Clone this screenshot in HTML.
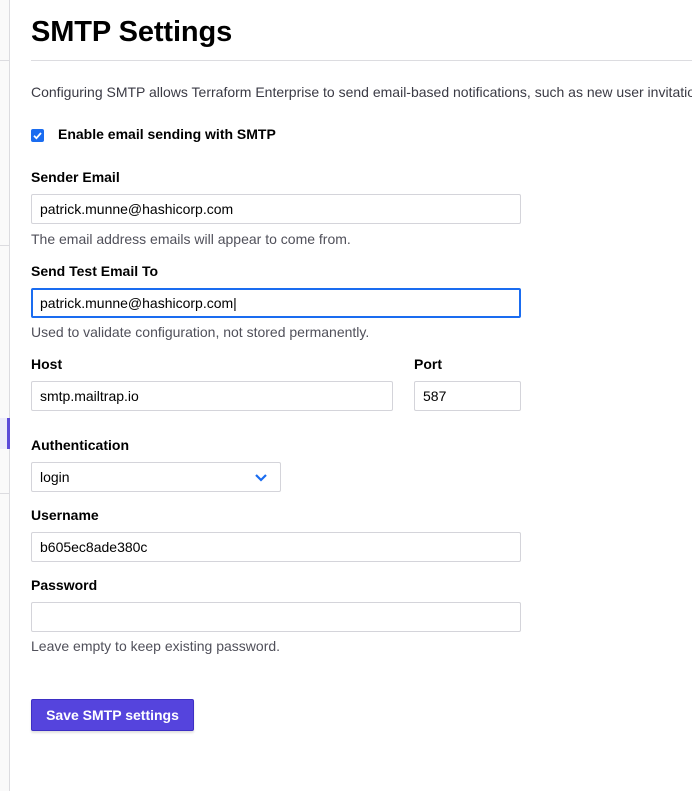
<!DOCTYPE html>
<html><head><style>
html,body{margin:0;width:692px;height:791px;overflow:hidden}
body{background:#fff;font-family:"Liberation Sans",Arial,sans-serif;color:#000;position:relative}
.wrap{position:absolute;left:0;top:0;width:692px;height:791px;overflow:hidden}
.side{position:absolute;left:0;top:0;width:9px;height:791px;background:#fafafa;border-right:1px solid #dcdce0}
.hl{position:absolute;left:0;width:9px;height:1px;background:#dcdce0}
.abs{position:absolute}
h1{position:absolute;left:31px;top:16px;margin:0;font-size:29px;font-weight:bold;letter-spacing:-0.1px}
.rule{position:absolute;left:31px;top:60px;width:661px;height:1px;background:#dcdce0}
.p{font-size:14px;color:#3a3a44;white-space:nowrap}
.lbl{font-size:14px;font-weight:bold;color:#000}
.inp{position:absolute;height:30px;box-sizing:border-box;border:1px solid #d4d4da;border-radius:2px;font-size:14px;padding:0 8px;line-height:28px;color:#000;background:#fff}
.help{font-size:14px;color:#50505a;white-space:nowrap}
</style></head><body><div class="wrap">
<div class="side"></div>
<div class="hl" style="top:60px"></div>
<div class="hl" style="top:245px"></div>
<div class="hl" style="top:493px"></div>
<div class="abs" style="left:0;top:418px;width:7px;height:31px;background:#ebeafa"></div>
<div class="abs" style="left:7px;top:418px;width:3px;height:31px;background:#5b4ad8"></div>

<h1>SMTP Settings</h1>
<div class="rule"></div>
<div class="abs p" style="left:31px;top:84px;width:661px;overflow:hidden">Configuring SMTP allows Terraform Enterprise to send email-based notifications, such as new user invitations and</div>
<div class="abs" style="left:31px;top:129px;width:13px;height:13px;background:#1a6cf0;border-radius:2px">
<svg width="13" height="13" viewBox="0 0 13 13"><path d="M3 6.8 L5.4 9.2 L10 4" stroke="#fff" stroke-width="1.8" fill="none"/></svg></div>
<div class="abs lbl" style="left:58px;top:126px">Enable email sending with SMTP</div>

<div class="abs lbl" style="left:31px;top:169px">Sender Email</div>
<div class="inp" style="left:31px;top:194px;width:490px">patrick.munne@hashicorp.com</div>
<div class="abs help" style="left:31px;top:231px">The email address emails will appear to come from.</div>

<div class="abs lbl" style="left:31px;top:263px">Send Test Email To</div>
<div class="inp" style="left:31px;top:288px;width:490px;border:2px solid #1a6cf0;padding-left:7px;line-height:26px">patrick.munne@hashicorp.com|</div>
<div class="abs help" style="left:31px;top:324px">Used to validate configuration, not stored permanently.</div>

<div class="abs lbl" style="left:31px;top:356px">Host</div>
<div class="abs lbl" style="left:414px;top:356px">Port</div>
<div class="inp" style="left:31px;top:381px;width:362px">smtp.mailtrap.io</div>
<div class="inp" style="left:414px;top:381px;width:107px">587</div>

<div class="abs lbl" style="left:31px;top:437px">Authentication</div>
<div class="inp" style="left:31px;top:462px;width:250px">login
<svg class="abs" style="left:222px;top:10px" width="14" height="9" viewBox="0 0 14 9"><path d="M2 2 L7 7 L12 2" stroke="#1a6cf0" stroke-width="2.2" fill="none"/></svg></div>

<div class="abs lbl" style="left:31px;top:507px">Username</div>
<div class="inp" style="left:31px;top:532px;width:490px">b605ec8ade380c</div>

<div class="abs lbl" style="left:31px;top:577px">Password</div>
<div class="inp" style="left:31px;top:602px;width:490px"></div>
<div class="abs help" style="left:31px;top:638px">Leave empty to keep existing password.</div>

<div class="abs" style="left:31px;top:699px;width:163px;height:32px;background:#5544dd;border:1px solid #3d2fc4;box-sizing:border-box;border-radius:2px;color:#fff;font-weight:bold;font-size:14px;text-align:center;line-height:30px;box-shadow:0 2px 2px rgba(0,0,0,.12)">Save SMTP settings</div>
</div></body></html>
